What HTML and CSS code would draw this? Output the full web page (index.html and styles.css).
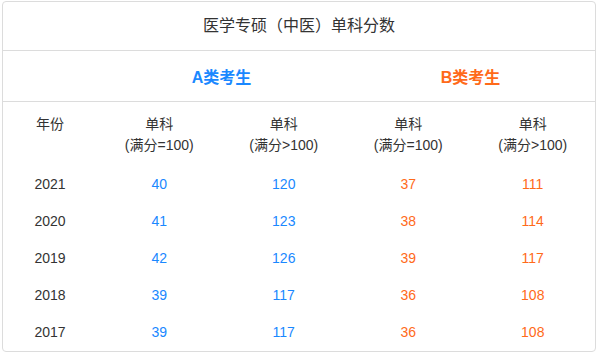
FILE: index.html
```html
<!DOCTYPE html>
<html lang="zh">
<head>
<meta charset="utf-8">
<link rel="stylesheet" href="styles.css">
</head>
<body>
<div class="card">
  <div class="title">医学专硕（中医）单科分数</div>
  <div class="groups">
    <div class="g-spacer"></div>
    <div class="group a">A类考生</div>
    <div class="group b">B类考生</div>
  </div>
  <table class="scores">
    <colgroup>
      <col class="c-year"><col class="c-val"><col class="c-val"><col class="c-val"><col class="c-val">
    </colgroup>
    <thead>
      <tr>
        <th>年份</th>
        <th>单科<br>(满分=100)</th>
        <th>单科<br>(满分&gt;100)</th>
        <th>单科<br>(满分=100)</th>
        <th>单科<br>(满分&gt;100)</th>
      </tr>
    </thead>
    <tbody>
      <tr><td>2021</td><td class="a">40</td><td class="a">120</td><td class="b">37</td><td class="b">111</td></tr>
      <tr><td>2020</td><td class="a">41</td><td class="a">123</td><td class="b">38</td><td class="b">114</td></tr>
      <tr><td>2019</td><td class="a">42</td><td class="a">126</td><td class="b">39</td><td class="b">117</td></tr>
      <tr><td>2018</td><td class="a">39</td><td class="a">117</td><td class="b">36</td><td class="b">108</td></tr>
      <tr><td>2017</td><td class="a">39</td><td class="a">117</td><td class="b">36</td><td class="b">108</td></tr>
    </tbody>
  </table>
</div>
</body>
</html>
```
FILE: styles.css
```css
html, body {
  margin: 0;
  padding: 0;
  background: #fff;
}
body {
  padding: 1px 2px 0 2px;
  font-family: "Liberation Sans", Arial, "Noto Sans CJK SC", sans-serif;
  color: #333;
}
.card {
  width: 592px;
  height: 349px;
  border: 1px solid #dcdcdc;
  border-radius: 4px;
  overflow: hidden;
}
.title {
  height: 48px;
  line-height: 48px;
  text-align: center;
  font-size: 16px;
  border-bottom: 1px solid #dcdcdc;
}
.groups {
  display: grid;
  grid-template-columns: 94px 249px 249px;
  height: 50px;
  align-items: center;
  border-bottom: 1px solid #dcdcdc;
}
.group {
  text-align: center;
  font-size: 16px;
  font-weight: bold;
}
.a { color: #1a88ff; }
.b { color: #ff6a1a; }
.scores {
  width: 592px;
  border-collapse: collapse;
  table-layout: fixed;
  font-size: 14px;
}
.c-year { width: 94px; }
.c-val { width: 124.5px; }
.scores th {
  font-weight: normal;
  line-height: 21px;
  padding: 12px 0 10px;
  text-align: center;
  vertical-align: top;
  color: #333;
}
.scores td {
  height: 37px;
  padding: 0;
  text-align: center;
  line-height: 37px;
}
```
